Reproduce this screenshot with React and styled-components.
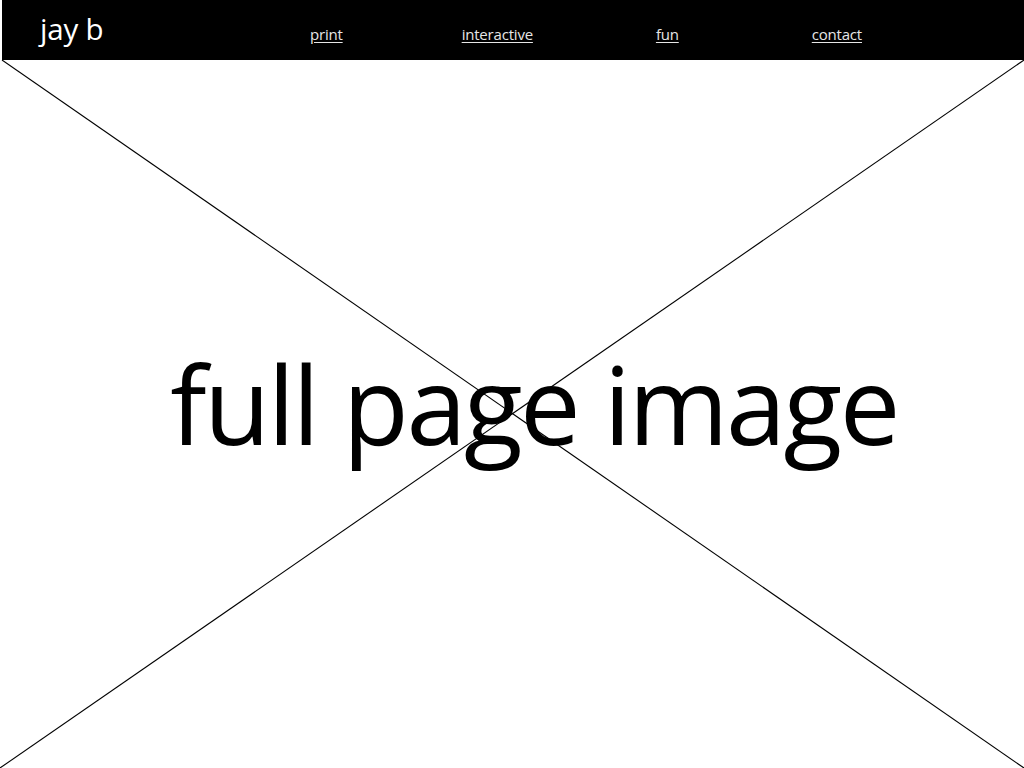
import styled, { createGlobalStyle } from 'styled-components'

const GlobalStyle = createGlobalStyle`
  html, body {
    margin: 0;
    padding: 0;
    background: #ffffff;
  }
  body {
    font-family: "Open Sans", "Noto Sans", sans-serif;
  }
`

const Page = styled.div`
  width: 1024px;
  height: 768px;
  display: flex;
  flex-direction: column;
  overflow: hidden;
`

const Header = styled.header`
  height: 60px;
  margin-left: 2px;
  background: #000000;
  display: flex;
  align-items: flex-start;
  padding: 0 0 0 38px;
  box-sizing: border-box;
`

const Logo = styled.a`
  color: #ffffff;
  font-size: 29.5px;
  line-height: 1;
  padding-top: 14px;
  text-decoration: none;
  letter-spacing: -0.2px;
  width: 270px;
`

const Nav = styled.nav`
  display: flex;
  padding-top: 27px;
`

const NavLink = styled.a`
  color: #e6e6e6;
  font-size: 15px;
  line-height: 1;
  text-decoration: underline;
  text-underline-offset: 2px;
  letter-spacing: -0.2px;
  margin-left: ${({ $offset }) => $offset}px;
`

const Hero = styled.main`
  position: relative;
  flex: 1;
  display: flex;
  align-items: center;
  justify-content: center;
`

const Cross = styled.svg`
  position: absolute;
  inset: 0;
  width: 100%;
  height: 100%;
`

const Caption = styled.h1`
  position: relative;
  margin: 0 0 0 44px;
  padding-bottom: 22px;
  font-weight: 400;
  font-size: 108px;
  letter-spacing: -2.5px;
  color: #000000;
`

const links = [
  { label: 'print', offset: 0 },
  { label: 'interactive', offset: 119 },
  { label: 'fun', offset: 123 },
  { label: 'contact', offset: 133 },
]

export default function App() {
  return (
    <>
      <GlobalStyle />
      <Page>
        <Header>
          <Logo href="#">jay b</Logo>
          <Nav>
            {links.map((l) => (
              <NavLink key={l.label} href="#" $offset={l.offset}>
                {l.label}
              </NavLink>
            ))}
          </Nav>
        </Header>
        <Hero>
          <Cross viewBox="0 0 1024 708" preserveAspectRatio="none">
            <line x1="2" y1="0" x2="1024" y2="708" stroke="#000" strokeWidth="1.1" />
            <line x1="1024" y1="0" x2="0" y2="708" stroke="#000" strokeWidth="1.1" />
          </Cross>
          <Caption>full page image</Caption>
        </Hero>
      </Page>
    </>
  )
}
